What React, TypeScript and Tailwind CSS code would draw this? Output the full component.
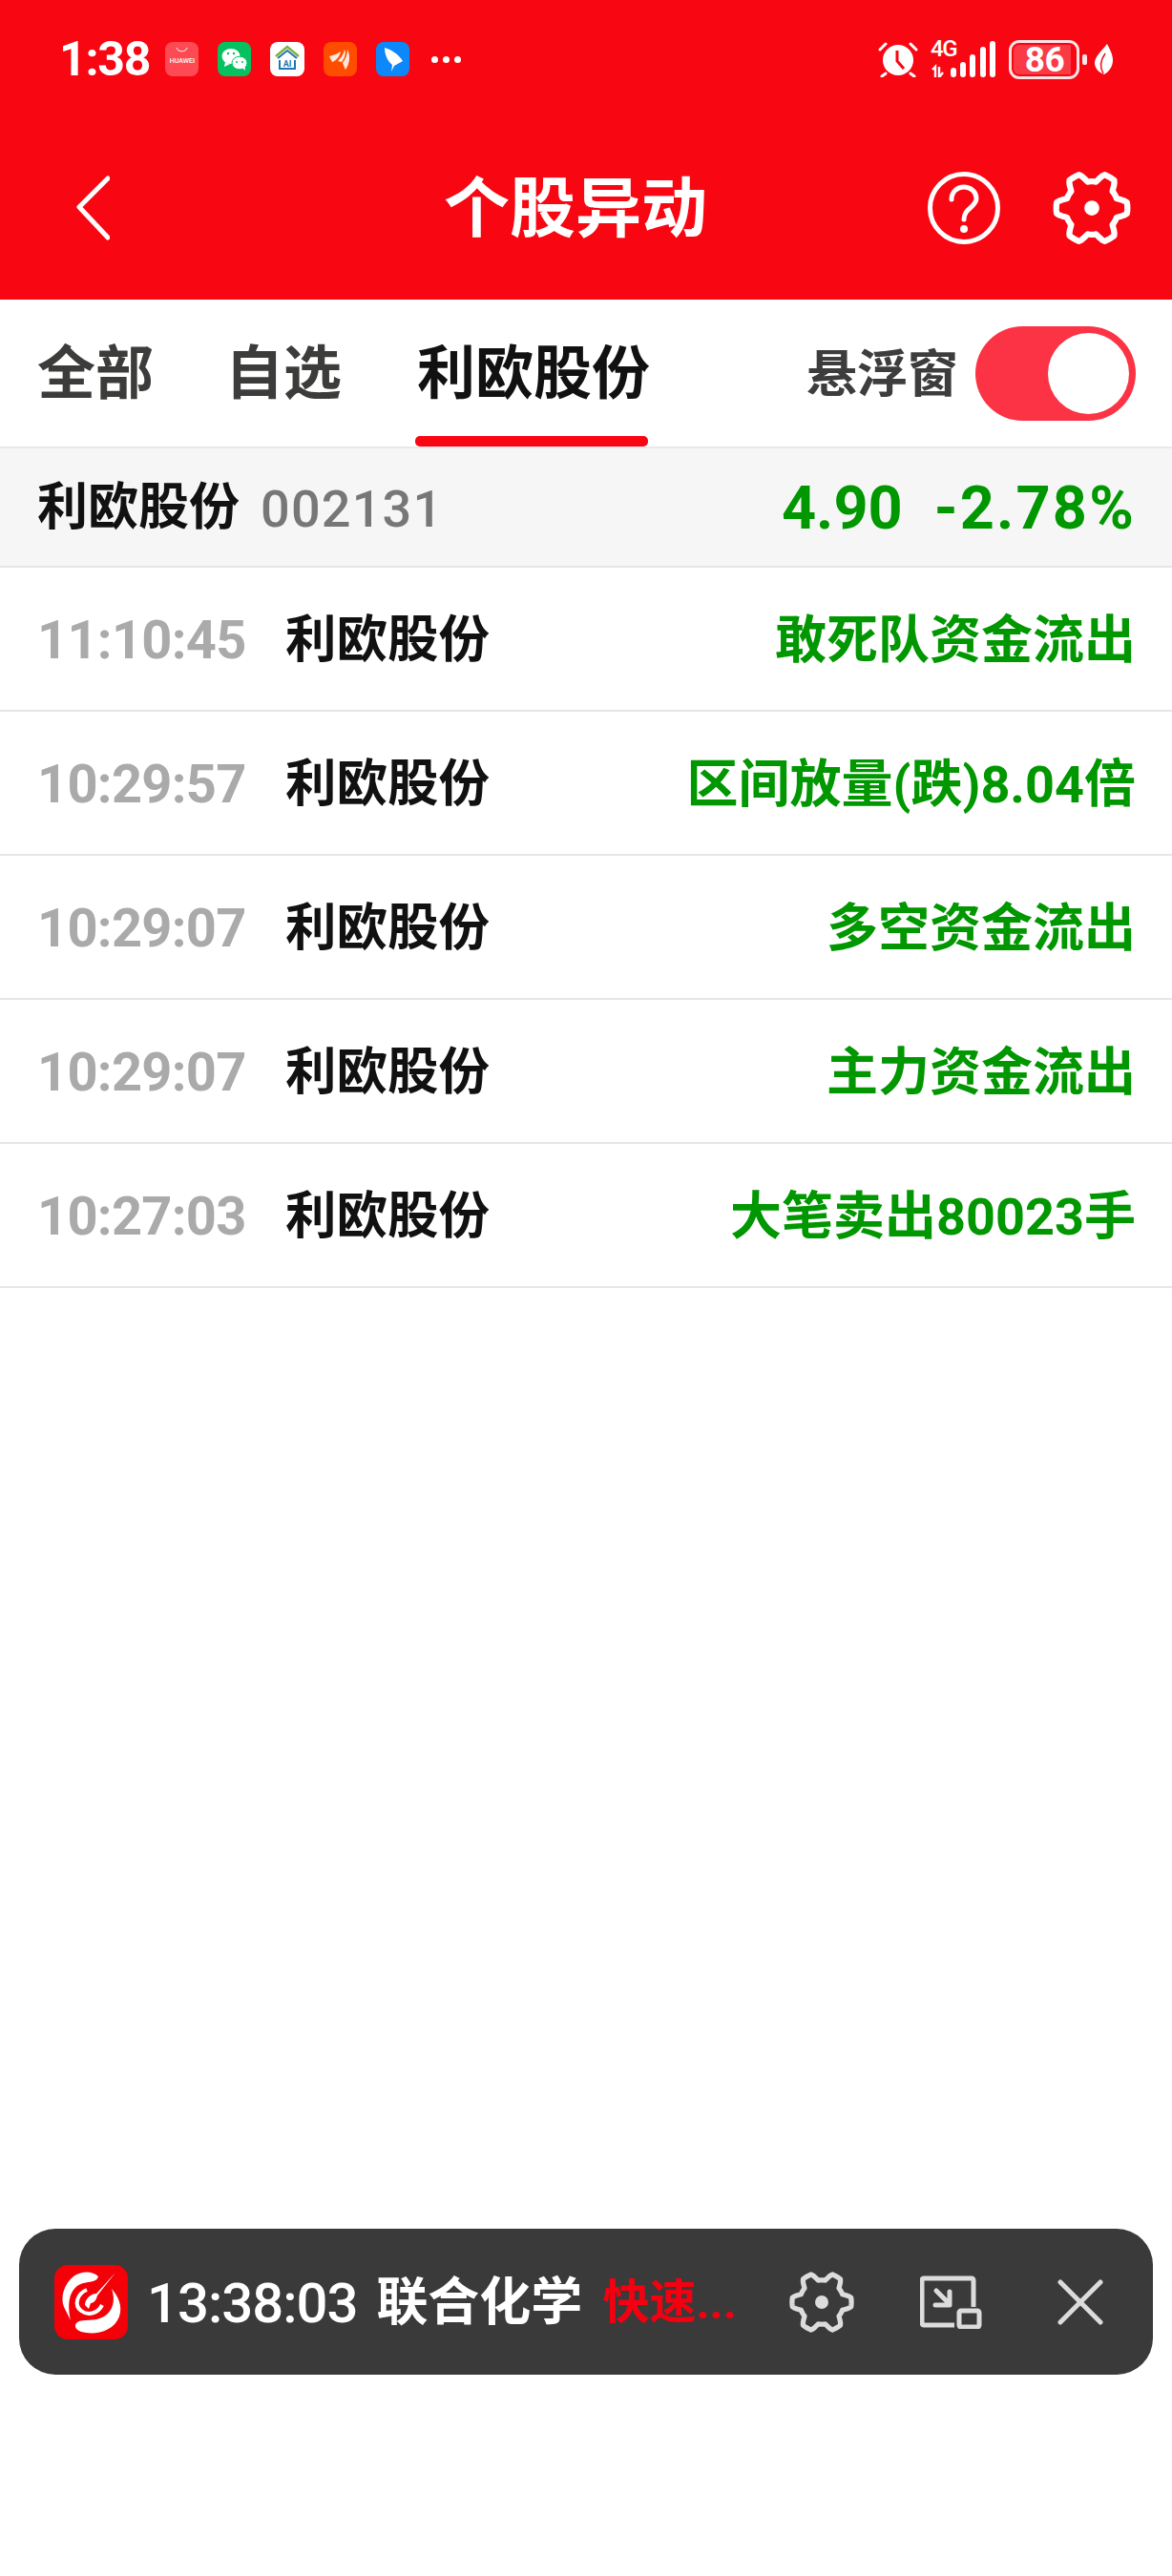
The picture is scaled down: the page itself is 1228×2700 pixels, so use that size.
const rows = [
	{ time: "11:10:45", name: "利欧股份", note: "敢死队资金流出" },
	{ time: "10:29:57", name: "利欧股份", note: "区间放量(跌)8.04倍" },
	{ time: "10:29:07", name: "利欧股份", note: "多空资金流出" },
	{ time: "10:29:07", name: "利欧股份", note: "主力资金流出" },
	{ time: "10:27:03", name: "利欧股份", note: "大笔卖出80023手" },
];

// six rounded lobes, with a notch at top and bottom
const gearPath = (() => {
	const pts: string[] = [];
	for (let i = 0; i < 120; i++) {
		const a = (i / 120) * Math.PI * 2;
		const c = Math.cos(a * 6);
		const s = Math.max(-1, Math.min(1, c * 1.8));
		const r = 31 + 4.5 * s;
		pts.push(`${(40 + r * Math.cos(a)).toFixed(2)} ${(40 + r * Math.sin(a)).toFixed(2)}`);
	}
	return "M" + pts.join("L") + "Z";
})();

const Gear = ({ className, dot }: { className: string; dot: number }) => (
	<svg viewBox="0 0 80 80" className={className} fill="none" stroke="currentColor" strokeWidth="6" strokeLinejoin="round">
		<path d={gearPath} />
		<circle cx="40" cy="40" r={dot} fill="currentColor" stroke="none" />
	</svg>
);

const AppIcons = () => (
	<div className="flex items-center gap-[20px] ml-[16px]">
		<div className="w-[35px] h-[36px] rounded-[8px] bg-[#fd4a53] flex flex-col items-center">
			<svg viewBox="0 0 35 12" className="w-[35px] h-[12px]" fill="none" stroke="white" strokeWidth="1">
				<path d="M12 6c1 5 10 5 11 0" />
			</svg>
			<span className="text-[7px] leading-[8px] mt-[4px] font-medium text-white">HUAWEI</span>
		</div>
		<svg viewBox="0 0 35 36" className="w-[35px] h-[36px]">
			<rect width="35" height="36" rx="8" fill="#07c160" />
			<ellipse cx="14" cy="15" rx="9.5" ry="8" fill="white" />
			<path d="M8 21l-1 5 6-3z" fill="white" />
			<ellipse cx="23" cy="22" rx="8" ry="6.8" fill="white" stroke="#07c160" strokeWidth="1" />
			<path d="M26 27l3 3-.5-5z" fill="white" />
			<circle cx="11" cy="12" r="1.2" fill="#07c160" />
			<circle cx="17" cy="12" r="1.2" fill="#07c160" />
			<circle cx="20" cy="21" r="1.1" fill="#07c160" />
			<circle cx="26" cy="21" r="1.1" fill="#07c160" />
		</svg>
		<svg viewBox="0 0 36 36" className="w-[36px] h-[36px]">
			<rect width="36" height="36" rx="8" fill="white" />
			<path d="M6 15L18 5l12 10" fill="none" stroke="#7fb23a" strokeWidth="2.4" />
			<path d="M8 17L18 9l10 8" fill="none" stroke="#1f75b5" strokeWidth="2" />
			<path d="M10 19v9h16v-9" fill="none" stroke="#1f75b5" strokeWidth="2" />
			<text x="18" y="26" textAnchor="middle" fontSize="9" fontWeight="700" fill="#1f75b5">AI</text>
		</svg>
		<svg viewBox="0 0 35 36" className="w-[35px] h-[36px]">
			<rect width="35" height="36" rx="8" fill="#ff4d00" />
			<path d="M6 15c5-1 9-3 12-5-1 5-5 10-9 11z" fill="#ffe9dc" />
			<path d="M15 20c3-3 6-7 7-12 2 4 0 9-3 13z" fill="#ffe9dc" />
			<path d="M20 22c3-4 5-9 5-14 3 5 3 14-2 21z" fill="#ffe9dc" />
		</svg>
		<svg viewBox="0 0 35 36" className="w-[35px] h-[36px]">
			<rect width="35" height="36" rx="8" fill="#0c88fa" />
			<path d="M9 6c7 2 15 7 19 14l-9 5-3 6 1-7C12 20 9 13 9 6z" fill="white" />
		</svg>
		<div className="flex gap-[5px] ml-[3px]">
			<span className="w-[7px] h-[7px] rounded-full bg-white" />
			<span className="w-[7px] h-[7px] rounded-full bg-white" />
			<span className="w-[7px] h-[7px] rounded-full bg-white" />
		</div>
	</div>
);

const SystemIcons = () => (
	<div className="ml-auto flex items-center">
		<svg viewBox="0 0 42 38" className="w-[42px] h-[38px]">
			<circle cx="21" cy="20" r="16" fill="white" />
			<path d="M20 10v11l7 8" fill="none" stroke="#f80612" strokeWidth="3" />
			<path d="M2 9l6-6M40 9l-6-6M8 34l-4 3M34 34l4 3" stroke="white" strokeWidth="3" strokeLinecap="round" />
		</svg>
		<div className="ml-[13px] w-[68px] h-[38px] relative">
			<span className="absolute left-0 top-[-4px] text-[24px] leading-[24px] font-medium text-white tracking-[-1.5px]">4G</span>
			<svg viewBox="0 0 68 38" className="w-[68px] h-[38px]">
				<path d="M2 30l3-3v11M9 27v11l4-5" fill="none" stroke="white" strokeWidth="2.4" />
				<rect x="21" y="28" width="6" height="10" rx="3" fill="white" />
				<rect x="31" y="22" width="6" height="16" rx="3" fill="white" />
				<rect x="41" y="14" width="6" height="24" rx="3" fill="white" />
				<rect x="52" y="6" width="6" height="32" rx="3" fill="white" />
				<rect x="62" y="0" width="6" height="38" rx="3" fill="white" />
			</svg>
		</div>
		<div className="ml-[14px] w-[74px] h-[41px] rounded-[11px] border-[3px] border-white/90 p-[2px] flex">
			<div className="w-[60px] h-full rounded-l-[6px] bg-[#fb3a46] flex items-center justify-center">
				<span className="ml-[5px] text-[37px] leading-none font-bold tracking-[-0.5px] text-white">86</span>
			</div>
		</div>
		<span className="ml-[3px] w-[5px] h-[11px] rounded-[2px] bg-white/90" />
		<svg viewBox="0 0 19 32" className="ml-[8px] w-[19px] h-[32px]">
			<path d="M13 0c3 6 6 11 6 17 0 7-4 12-9 15C4 30 0 25 0 20 0 13 8 7 13 0z" fill="white" />
			<path d="M11 10C6 17 5 24 9 31" fill="none" stroke="#f80612" strokeWidth="1.5" />
		</svg>
	</div>
);

const StatusBar = () => (
	<div className="h-[84px] pt-[40px] pl-[62px] pr-[62px] flex items-center">
		<span className="text-[50px] leading-none font-bold tracking-[-1.2px] text-white">1:38</span>
		<AppIcons />
		<SystemIcons />
	</div>
);

const NavBar = () => (
	<div className="h-[230px] pt-[38px] pl-[80px] pr-[45px] flex items-center text-white">
		<svg viewBox="0 0 35 68" className="w-[35px] h-[68px]" fill="none" stroke="currentColor" strokeWidth="5" strokeLinecap="round" strokeLinejoin="round">
			<path d="M33 3L3 33l30 32" />
		</svg>
		<h1 className="ml-[350px] mt-[3px] text-[69px] leading-none font-bold whitespace-nowrap">个股异动</h1>
		<div className="ml-auto flex items-center gap-[57px]">
			<svg viewBox="0 0 76 76" className="w-[76px] h-[76px]" fill="none" stroke="currentColor" strokeWidth="5">
				<circle cx="38" cy="38" r="35.5" />
				<path d="M25 29c0-8 6-13 13-13s13 5 13 12c0 9-13 10-13 22" strokeLinecap="round" />
				<circle cx="38" cy="60" r="4" fill="currentColor" stroke="none" />
			</svg>
			<Gear className="w-[84px] h-[84px] -mx-[3px]" dot={7.5} />
		</div>
	</div>
);

const Tabs = () => (
	<div className="h-[156px] border-b-2 border-[#e8e8ee] pl-[39px] pr-[38px] flex items-stretch text-[61px] font-bold">
		<div className="flex items-center pt-[4px] text-[#3c3d3b]">全部</div>
		<div className="ml-[75px] flex items-center pt-[4px] text-[#3c3d3b]">自选</div>
		<div className="ml-[79px] relative flex items-center pt-[4px] text-[#111111] whitespace-nowrap">
			利欧股份
			<span className="absolute left-[-2px] right-[2px] bottom-0 h-[11px] rounded-[5px] bg-[#f80612]" />
		</div>
		<div className="ml-auto flex items-center gap-[18px]">
			<span className="pt-[5px] text-[53px] font-bold text-[#3d3d3d]">悬浮窗</span>
			<div className="w-[168px] h-[99px] rounded-full bg-[#fb3344] flex items-center justify-end pr-[7px]">
				<div className="w-[85px] h-[85px] rounded-full bg-white" />
			</div>
		</div>
	</div>
);

const StockHeader = () => (
	<div className="h-[125px] pt-[3px] border-b-2 border-[#e6e6ea] bg-[#f6f6f7] pl-[39px] pr-[38px] flex items-center">
		<span className="text-[53px] font-bold text-[#111111]">利欧股份</span>
		<span className="ml-[22px] text-[54px] font-medium tracking-[1.2px] text-[#777777]">002131</span>
		<span className="ml-auto text-[63px] font-bold text-[#009700]">4.90</span>
		<span className="ml-[33px] text-[63px] font-bold tracking-[2.2px] text-[#009700]">-2.78%</span>
	</div>
);

const Row = ({ time, name, note }: { time: string; name: string; note: string }) => (
	<div className="h-[151px] pt-[3px] border-b-2 border-[#e6e6e6] pl-[39px] pr-[38px] flex items-center text-[54px]">
		<span className="w-[260px] text-[56px] font-bold tracking-[-0.7px] text-[#aaaaaa]">{time}</span>
		<span className="text-[53.5px] font-bold text-[#111111]">{name}</span>
		<span className="ml-auto font-bold text-[#009700]">{note}</span>
	</div>
);

const Logo = () => (
	<svg viewBox="0 0 77 78" className="w-[77px] h-[78px] shrink-0">
		<rect width="77" height="78" rx="14" fill="#f40008" />
		<g fill="white">
			<path d="M46 12C40 6 28 6 20 12 10 20 6 34 10 44l7 14C14 44 14 30 24 22c8-6 20-2 22-10z" />
			<path d="M64 8L44 30c-6 0-12 6-12 12l4 4 2-6c4 0 6-4 7-8z" />
			<path d="M60 25c4 11 2 23-8 29-10 6-22 2-28 6-4 3-2 8 4 10 14 4 34 0 40-16 4-12-2-22-8-29z" />
		</g>
		<path d="M34 26c-10 4-14 16-6 22 8 6 18 2 22-6" fill="none" stroke="white" strokeWidth="4" />
	</svg>
);

const FloatBar = () => (
	<div className="mx-[20px] h-[153px] rounded-[38px] bg-[#3a3a3a] pl-[37px] flex items-center">
		<Logo />
		<span className="ml-[20px] mt-[2px] text-[58px] font-medium tracking-[-1px] text-white leading-none">13:38:03</span>
		<span className="ml-[20px] mt-[2px] text-[54px] font-bold text-white">联合化学</span>
		<span className="ml-[21px] mt-[2px] text-[49px] font-bold text-[#f40010] whitespace-nowrap">快速...</span>
		<Gear className="ml-[54px] w-[70px] h-[70px] text-[#dcdcdc]" dot={8} />
		<svg viewBox="0 0 65 56" className="ml-[68px] w-[65px] h-[56px] text-[#dcdcdc]" fill="none" stroke="currentColor" strokeWidth="5" strokeLinejoin="round">
			<path d="M36 52H4a2 2 0 0 1-2-2V5a2 2 0 0 1 2-2h50a2 2 0 0 1 2 2v28" />
			<path d="M17 16l14 14M31 17v14H16" strokeLinecap="round" />
			<rect x="41" y="37" width="21" height="17" rx="2" />
		</svg>
		<svg viewBox="0 0 48 48" className="ml-[79px] w-[48px] h-[48px] text-[#dcdcdc]" fill="none" stroke="currentColor" strokeWidth="5" strokeLinecap="round">
			<path d="M3 3l42 42M45 3L3 45" />
		</svg>
	</div>
);

export default function App() {
	return (
		<div className="w-[1228px] h-[2700px] bg-white flex flex-col font-['Roboto','Noto_Sans_CJK_SC',sans-serif]">
			<header className="h-[314px] bg-[#f80612]">
				<StatusBar />
				<NavBar />
			</header>
			<Tabs />
			<StockHeader />
			{rows.map((r, i) => (
				<Row key={i} {...r} />
			))}
			<div className="flex-1" />
			<FloatBar />
			<div className="h-[211px]" />
		</div>
	);
}
